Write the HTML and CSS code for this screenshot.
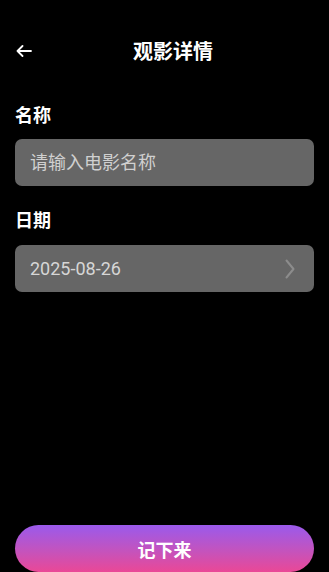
FILE: index.html
```html
<!DOCTYPE html>
<html lang="zh-CN">
<head>
    <meta charset="UTF-8">
    <meta name="viewport" content="width=device-width, initial-scale=1.0">
    <title>观影详情</title>
    <link rel="stylesheet" href="styles.css">
</head>
<body>
    <div class="page">
        <div class="header">
            <button class="back" aria-label="返回">
                <svg width="16" height="12" viewBox="0 0 16 12">
                    <path d="M15 6H1.5M6.5 1L1.5 6l5 5" fill="none" stroke="#fff" stroke-width="1.8" stroke-linecap="round" stroke-linejoin="round"/>
                </svg>
            </button>
            <h1 class="title">观影详情</h1>
        </div>

        <div class="form">
            <label class="label label-first" for="movieName">名称</label>
            <input class="field" type="text" id="movieName" placeholder="请输入电影名称" />

            <label class="label">日期</label>
            <div class="field date-field">
                <span>2025-08-26</span>
                <svg width="10" height="20" viewBox="0 0 10 20">
                    <path d="M1.5 1.5L8.5 10l-7 8.5" fill="none" stroke="#8c8c8c" stroke-width="2" stroke-linecap="round" stroke-linejoin="round"/>
                </svg>
            </div>
        </div>

        <button class="save">记下来</button>
    </div>
</body>
</html>
```

FILE: styles.css
```css
html, body {
    margin: 0;
    padding: 0;
    background-color: #000;
    color: #fff;
    font-family: Roboto, "Noto Sans CJK SC", sans-serif;
}

.page {
    height: 100vh;
    display: flex;
    flex-direction: column;
    padding: 23px 15px 0;
    box-sizing: border-box;
}

.header {
    height: 56px;
    display: flex;
    align-items: center;
}

.back {
    width: 17px;
    height: 24px;
    padding: 0;
    margin-left: 1px;
    border: none;
    background: none;
    display: flex;
    align-items: center;
    cursor: pointer;
}

.title {
    flex: 1;
    margin: 0;
    padding: 1px 1px 0 0;
    text-align: center;
    font-size: 20px;
    font-weight: bold;
    line-height: 24px;
}

.form {
    display: flex;
    flex-direction: column;
}

.label {
    display: block;
    margin: 23px 0 12px;
    font-size: 18px;
    font-weight: bold;
    line-height: 24px;
}

.label-first {
    margin: 25px 0 11px;
}

.field {
    height: 47px;
    box-sizing: border-box;
    padding: 0 15px;
    border: none;
    border-radius: 7px;
    background-color: #666;
    color: #d6d6d6;
    font-family: Roboto, "Noto Sans CJK SC", sans-serif;
    font-size: 18px;
    outline: none;
}

.field::placeholder {
    color: #d0d0d0;
}

.date-field {
    display: flex;
    align-items: center;
    justify-content: space-between;
    padding-right: 19px;
}

.save {
    margin-top: auto;
    height: 47px;
    border: none;
    border-radius: 24px;
    background: linear-gradient(180deg, #9a5aec 0%, #c453bd 55%, #ea4896 100%);
    color: #fff;
    font-family: Roboto, "Noto Sans CJK SC", sans-serif;
    font-size: 18px;
    font-weight: bold;
    cursor: pointer;
}
```
